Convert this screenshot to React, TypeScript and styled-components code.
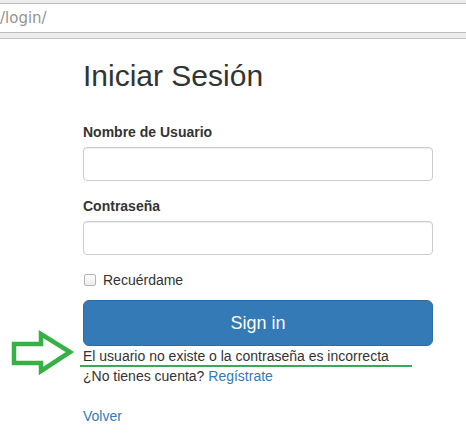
import React from "react";
import styled, { createGlobalStyle } from "styled-components";

const Global = createGlobalStyle`
  html, body { margin: 0; padding: 0; background: #fff; }
  body { font-family: "Liberation Sans", Arial, sans-serif; font-size: 14px; line-height: 20px; color: #333; }
  * { box-sizing: border-box; }
`;

const Page = styled.div`
  position: relative;
  width: 466px;
  height: 434px;
  overflow: hidden;
`;

const BrowserChrome = styled.div`
  height: 39px;
  background: #ededed;
  padding-top: 3px;
  border-bottom: 1px solid #c4c4c4;
`;

const UrlField = styled.div`
  height: 30px;
  background: #fff;
  border-top: 1px solid #bdbdbd;
  border-bottom: 1px solid #bdbdbd;
  display: flex;
  align-items: center;
  font-family: "DejaVu Sans", sans-serif;
  font-size: 15px;
  color: #939393;
  padding-left: 0;
`;

const Content = styled.div`
  padding-left: 83px;
  width: 433px;
  display: flex;
  flex-direction: column;
`;

const Title = styled.h1`
  margin: 20px 0 30px;
  font-size: 30px;
  line-height: 33px;
  font-weight: 400;
  color: #333;
`;

const FormGroup = styled.div`
  display: flex;
  flex-direction: column;
  margin-bottom: 15px;
`;

const Label = styled.label`
  font-weight: 700;
  font-size: 14px;
  line-height: 20px;
  margin-bottom: 5px;
`;

const Input = styled.input`
  height: 34px;
  width: 100%;
  border: 1px solid #ccc;
  border-radius: 4px;
  box-shadow: inset 0 1px 1px rgba(0, 0, 0, 0.075);
  padding: 6px 12px;
  font-size: 14px;
  background: #fff;
`;

const CheckRow = styled.label`
  display: flex;
  align-items: center;
  height: 20px;
  padding-left: 20px;
  position: relative;
  margin-bottom: 10px;
  font-size: 14px;
`;

const Check = styled.input`
  appearance: none;
  position: absolute;
  left: 1px;
  top: 4px;
  margin: 0;
  width: 12px;
  height: 12px;
  border: 1px solid #b5b5b5;
  border-radius: 2px;
  background: linear-gradient(#fcfcfc, #ececec);
`;

const SignIn = styled.button`
  height: 46px;
  width: 100%;
  border: 1px solid #2e6da4;
  border-radius: 6px;
  background: #337ab7;
  color: #fff;
  font-family: "Liberation Sans", Arial, sans-serif;
  font-size: 18px;
  line-height: 24px;
  padding: 10px 16px;
`;

const Line = styled.p`
  margin: 0;
  font-size: 14px;
  line-height: 20px;
  color: #333;
`;

const Link = styled.a`
  color: #337ab7;
  text-decoration: none;
`;

const BackLink = styled(Link)`
  margin-top: 20px;
  line-height: 20px;
  font-size: 14px;
  align-self: flex-start;
`;

const Underline = styled.div`
  position: absolute;
  left: 80px;
  top: 365px;
  width: 332px;
  height: 2px;
  background: #3aa85a;
`;

const Arrow = styled.svg`
  position: absolute;
  left: 0;
  top: 320px;
`;

export default function App() {
  return (
    <Page>
      <Global />
      <BrowserChrome>
        <UrlField>/login/</UrlField>
      </BrowserChrome>
      <Content>
        <Title>Iniciar Sesión</Title>
        <FormGroup>
          <Label>Nombre de Usuario</Label>
          <Input type="text" />
        </FormGroup>
        <FormGroup>
          <Label>Contraseña</Label>
          <Input type="password" />
        </FormGroup>
        <CheckRow>
          <Check type="checkbox" />
          Recuérdame
        </CheckRow>
        <SignIn>Sign in</SignIn>
        <Line>El usuario no existe o la contraseña es incorrecta</Line>
        <Line>
          ¿No tienes cuenta? <Link href="#">Regístrate</Link>
        </Line>
        <BackLink href="#">Volver</BackLink>
      </Content>
      <Underline />
      <Arrow width="80" height="60" viewBox="0 0 80 60">
        <polygon
          points="14,24 41,24 41,14 70,32 41,51 41,43 14,43"
          fill="none"
          stroke="#36b146"
          strokeWidth="4.5"
          strokeLinejoin="miter"
        />
      </Arrow>
    </Page>
  );
}
